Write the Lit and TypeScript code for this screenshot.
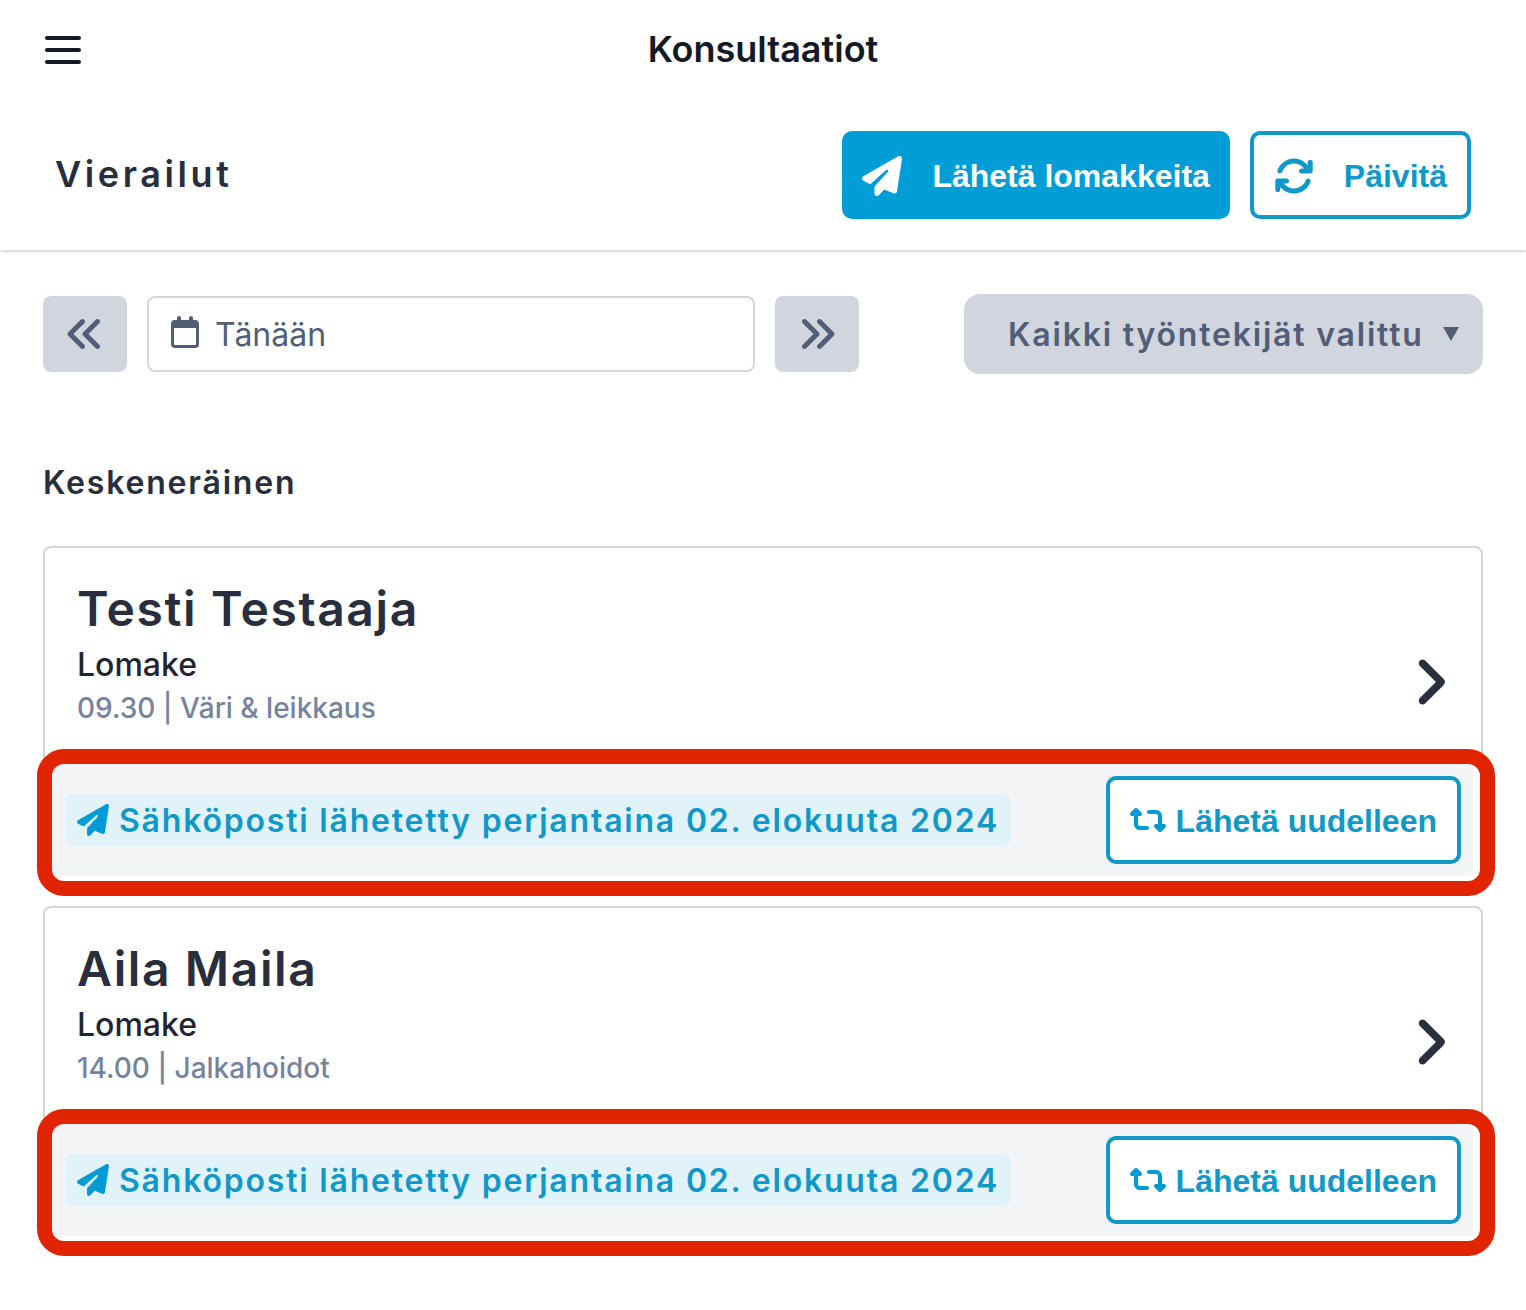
import { LitElement, html, css, svg } from "lit";
import { customElement, property } from "lit/decorators.js";

const planePath = svg`<path d="M498.1 5.6c10.1 7 15.4 19.1 13.5 31.2l-64 416c-1.5 9.7-7.4 18.2-16 23s-18.9 5.4-28 1.6L284 427.7l-68.5 74.1c-8.9 9.7-22.9 12.9-35.2 8.1S160 493.2 160 480V396.4c0-4 1.5-7.8 4.2-10.7L331.8 202.8c5.8-6.3 5.6-16-.4-22s-15.7-6.4-22-.7L106 360.8 17.7 316.6C7.1 311.3 .3 300.7 0 288.9s5.9-22.8 16.1-28.7l448-256c10.7-6.1 23.9-5.5 34 1.4z"/>`;
const rotatePath = svg`<path d="M105.1 202.6c7.7-21.8 20.2-42.3 37.8-59.8c62.5-62.5 163.8-62.5 226.3 0L386.3 160H352c-17.7 0-32 14.3-32 32s14.3 32 32 32H463.5h.4c17.7 0 32-14.3 32-32V80c0-17.7-14.3-32-32-32s-32 14.3-32 32v35.2L414.4 97.6c-87.5-87.5-229.3-87.5-316.8 0C73.2 122 55.6 150.7 44.8 181.4c-5.9 16.7 2.9 34.9 19.5 40.8s34.9-2.9 40.8-19.5zM39 289.3c-5 1.5-9.8 4.2-13.7 8.2c-4 4-6.7 8.8-8.1 14c-.3 1.2-.6 2.5-.8 3.8c-.3 1.7-.4 3.4-.4 5.1V432c0 17.7 14.3 32 32 32s32-14.3 32-32V396.9l17.6 17.5c87.5 87.4 229.3 87.4 316.7 0c24.4-24.4 42.1-53.1 52.9-83.7c5.9-16.7-2.9-34.9-19.5-40.8s-34.9 2.9-40.8 19.5c-7.7 21.8-20.2 42.3-37.8 59.8c-62.5 62.5-163.8 62.5-226.3 0l-.1-.1L125.6 352H160c17.7 0 32-14.3 32-32s-14.3-32-32-32H48.4c-1.6 0-3.2 .1-4.8 .3s-3.1 .5-4.6 1z"/>`;
const retweetPath = svg`<path d="M272 416c17.7 0 32-14.3 32-32s-14.3-32-32-32H160c-17.7 0-32-14.3-32-32V192h32c12.9 0 24.6-7.8 29.6-19.8s2.2-25.7-6.9-34.9l-64-64c-12.5-12.5-32.8-12.5-45.3 0l-64 64c-9.2 9.2-11.9 22.9-6.9 34.9s16.6 19.8 29.6 19.8l32 0 0 128c0 53 43 96 96 96H272zM304 96c-17.7 0-32 14.3-32 32s14.3 32 32 32l112 0c17.7 0 32 14.3 32 32l0 128H416c-12.9 0-24.6 7.8-29.6 19.8s-2.2 25.7 6.9 34.9l64 64c12.5 12.5 32.8 12.5 45.3 0l64-64c9.2-9.2 11.9-22.9 6.9-34.9s-16.6-19.8-29.6-19.8l-32 0V192c0-53-43-96-96-96L304 96z"/>`;
const anglesPath = svg`<path d="M41.4 233.4c-12.5 12.5-12.5 32.8 0 45.3l160 160c12.5 12.5 32.8 12.5 45.3 0s12.5-32.8 0-45.3L109.3 256 246.6 118.6c12.5-12.5 12.5-32.8 0-45.3s-32.8-12.5-45.3 0l-160 160zm352-160l-160 160c-12.5 12.5-12.5 32.8 0 45.3l160 160c12.5 12.5 32.8 12.5 45.3 0s12.5-32.8 0-45.3L301.3 256 438.6 118.6c12.5-12.5 12.5-32.8 0-45.3s-32.8-12.5-45.3 0z"/>`;
const anglePath = svg`<path d="M278.6 233.4c12.5 12.5 12.5 32.8 0 45.3l-160 160c-12.5 12.5-32.8 12.5-45.3 0s-12.5-32.8 0-45.3L210.7 256 73.4 118.6c-12.5-12.5-12.5-32.8 0-45.3s32.8-12.5 45.3 0l160 160z"/>`;

const shared = css`
  * {
    box-sizing: border-box;
  }
  h1,
  h2,
  h3,
  p {
    margin: 0;
  }
  svg {
    display: block;
    flex: none;
    fill: currentColor;
  }
  button {
    margin: 0;
    cursor: pointer;
  }
  .action {
    display: flex;
    align-items: center;
    height: 88px;
    padding: 2px 20px 0;
    border: 4px solid #1098c8;
    border-radius: 10px;
    background: #fff;
    color: #1098c8;
    font: 700 32px/40px "Liberation Sans", Arial, sans-serif;
    white-space: nowrap;
  }
`;

interface Visit {
  name: string;
  form: string;
  time: string;
  service: string;
  status: string;
}

@customElement("visit-card")
export class VisitCard extends LitElement {
  @property({ attribute: false }) visit!: Visit;

  static styles = [
    shared,
    css`
      :host {
        display: block;
      }
      .card {
        position: relative;
        padding: 25px 8px 8px;
        border: 2px solid #d2d5da;
        border-radius: 8px;
        background: #fff;
      }
      .body {
        display: flex;
        justify-content: space-between;
        align-items: flex-end;
        padding: 0 24px;
        margin-bottom: 33px;
      }
      .person {
        font-size: 32px;
        font-weight: 600;
        letter-spacing: 0.05em;
        color: #282e3b;
      }
      .name {
        display: block;
        font-size: 48px;
        line-height: 72px;
      }
      .form {
        font-size: 32px;
        line-height: 40px;
        font-weight: 500;
        letter-spacing: normal;
        color: #1f2430;
      }
      .meta {
        font-size: 28px;
        line-height: 46px;
        font-weight: 500;
        letter-spacing: normal;
        color: #77839e;
      }
      .open {
        display: block;
        margin-bottom: 19px;
        color: #2a303d;
      }
      .footer {
        display: flex;
        justify-content: space-between;
        align-items: center;
        padding: 12px;
        border-radius: 6px;
        background: #f3f4f6;
      }
      .status {
        display: flex;
        align-items: center;
        gap: 10px;
        padding: 0 12px;
        border-radius: 8px;
        background: #e2f2f9;
        color: #1098c8;
        font-size: 32px;
        line-height: 50px;
        font-weight: 600;
      }
      .label {
        padding-top: 2px;
      }
      .resend {
        gap: 10px;
        padding: 0 20px;
      }
      .status svg,
      .resend svg {
        color: #009bd4;
      }
      .highlight {
        position: absolute;
        inset: 201px -14px -12px -8px;
        border: 15px solid #e12400;
        border-radius: 27px;
        pointer-events: none;
      }
    `,
  ];

  render() {
    const v = this.visit;
    return html`
      <article class="card">
        <div class="body">
          <div>
            <h3 class="person"><span class="name">${v.name}</span></h3>
            <p class="form">${v.form}</p>
            <p class="meta">${v.time} | ${v.service}</p>
          </div>
          <a class="open" href="#" aria-label=${v.name}>
            <svg width="38" height="60" viewBox="0 0 320 512">${anglePath}</svg>
          </a>
        </div>
        <div class="footer">
          <div class="status">
            <svg width="32" height="32" viewBox="0 0 512 512">${planePath}</svg>
            <span class="label">${v.status}</span>
          </div>
          <button class="action resend" type="button">
            <svg width="36" height="32" viewBox="0 0 576 512">${retweetPath}</svg>
            <span class="label">Lähetä uudelleen</span>
          </button>
        </div>
        <div class="highlight"></div>
      </article>
    `;
  }
}

@customElement("app-root")
export class AppRoot extends LitElement {
  static styles = [
    shared,
    css`
      :host {
        display: block;
        min-height: 100vh;
        background: #fff;
        font-family: Inter, "Liberation Sans", sans-serif;
        color: #282e3b;
      }
      .topbar {
        display: grid;
        grid-template-columns: 1fr auto 1fr;
        align-items: center;
        height: 100px;
        padding: 0 45px;
      }
      .menu {
        display: grid;
        gap: 8px;
        width: 36px;
        padding: 0;
        border: 0;
        background: none;
      }
      .bar {
        height: 4px;
        border-radius: 2px;
        background: #141926;
      }
      .title {
        padding-bottom: 2px;
        font-size: 36px;
        line-height: 48px;
        font-weight: 600;
        color: #141926;
      }
      .toolbar {
        display: flex;
        align-items: center;
        gap: 20px;
        height: 150px;
        padding: 0 55px;
        box-shadow: 0 1px 4px rgba(0, 0, 0, 0.24);
        clip-path: inset(0 0 -8px 0);
      }
      .heading {
        flex: 1;
        padding-bottom: 2px;
        font-size: 36px;
        line-height: 48px;
        font-weight: 600;
        letter-spacing: 0.1em;
      }
      .toolbar .action {
        gap: 30px;
      }
      .toolbar .primary {
        padding: 2px 16px 0;
        border-color: #009dd6;
        background: #009dd6;
        color: #fff;
      }
      .content {
        padding: 44px 43px;
        font-size: 36px;
        letter-spacing: 0.05em;
      }
      .filters {
        display: flex;
        align-items: center;
        justify-content: space-between;
        gap: 40px;
      }
      .dates {
        display: flex;
        flex: 1;
        gap: 20px;
        max-width: 816px;
      }
      .step {
        display: grid;
        place-items: center;
        flex: none;
        width: 84px;
        height: 76px;
        padding: 0;
        border: 0;
        border-radius: 8px;
        background: #d1d5de;
        color: #525e75;
      }
      .flip {
        transform: rotate(180deg);
      }
      .datebox {
        display: flex;
        flex: 1;
        align-items: center;
        gap: 16px;
        min-width: 0;
        height: 76px;
        padding: 0 22px;
        border: 2px solid #d2d5dc;
        border-radius: 8px;
        color: #525e75;
      }
      .date {
        flex: 1;
        min-width: 0;
        padding: 2px 0 0;
        border: 0;
        outline: 0;
        background: none;
        color: inherit;
        font: 400 32px/40px Inter, "Liberation Sans", sans-serif;
        letter-spacing: normal;
      }
      .staff {
        display: grid;
        align-items: center;
        color: #525e75;
      }
      .select,
      .caret {
        grid-area: 1 / 1;
      }
      .select {
        appearance: none;
        height: 80px;
        margin: 0;
        padding: 2px 59px 0 44px;
        border: 0;
        border-radius: 16px;
        background: #d1d5de;
        color: inherit;
        font: 600 32px/40px Inter, "Liberation Sans", sans-serif;
        letter-spacing: inherit;
      }
      .caret {
        justify-self: end;
        margin-right: 24px;
        pointer-events: none;
      }
      .section {
        margin: 85px 0 39px;
        font-size: 32px;
        line-height: 48px;
        font-weight: 600;
      }
      .list {
        display: grid;
        gap: 20px;
      }
    `,
  ];

  private visits: Visit[] = [
    {
      name: "Testi Testaaja",
      form: "Lomake",
      time: "09.30",
      service: "Väri & leikkaus",
      status: "Sähköposti lähetetty perjantaina 02. elokuuta 2024",
    },
    {
      name: "Aila Maila",
      form: "Lomake",
      time: "14.00",
      service: "Jalkahoidot",
      status: "Sähköposti lähetetty perjantaina 02. elokuuta 2024",
    },
  ];

  render() {
    return html`
      <header>
        <div class="topbar">
          <button class="menu" type="button" aria-label="Valikko">
            <span class="bar"></span><span class="bar"></span><span class="bar"></span>
          </button>
          <h1 class="title">Konsultaatiot</h1>
        </div>
        <div class="toolbar">
          <h2 class="heading">Vierailut</h2>
          <button class="action primary" type="button">
            <svg width="40" height="40" viewBox="0 0 512 512">${planePath}</svg>
            <span>Lähetä lomakkeita</span>
          </button>
          <button class="action" type="button">
            <svg width="40" height="40" viewBox="0 0 512 512">${rotatePath}</svg>
            <span>Päivitä</span>
          </button>
        </div>
      </header>
      <main class="content">
        <div class="filters">
          <div class="dates">
            <button class="step" type="button" aria-label="Edellinen">
              <svg width="40" height="40" viewBox="0 0 512 512">${anglesPath}</svg>
            </button>
            <label class="datebox">
              <svg width="28" height="36" viewBox="0 0 28 36">
                <path
                  fill-rule="evenodd"
                  d="M8 0a2 2 0 0 1 2 2v2h8V2a2 2 0 0 1 4 0v2h2a4 4 0 0 1 4 4v20a4 4 0 0 1-4 4H4a4 4 0 0 1-4-4V8a4 4 0 0 1 4-4h2V2a2 2 0 0 1 2-2zM3 12v16a1 1 0 0 0 1 1h20a1 1 0 0 0 1-1V12z"
                />
              </svg>
              <input class="date" type="text" aria-label="Päivä" .value=${"Tänään"} />
            </label>
            <button class="step" type="button" aria-label="Seuraava">
              <svg class="flip" width="40" height="40" viewBox="0 0 512 512">${anglesPath}</svg>
            </button>
          </div>
          <div class="staff">
            <select class="select" aria-label="Työntekijät">
              <option>Kaikki työntekijät valittu</option>
            </select>
            <svg class="caret" width="16" height="16" viewBox="0 0 16 16"><path d="M0 1h16L8 15z" /></svg>
          </div>
        </div>
        <h2 class="section">Keskeneräinen</h2>
        <div class="list">
          ${this.visits.map((v) => html`<visit-card .visit=${v}></visit-card>`)}
        </div>
      </main>
    `;
  }
}
